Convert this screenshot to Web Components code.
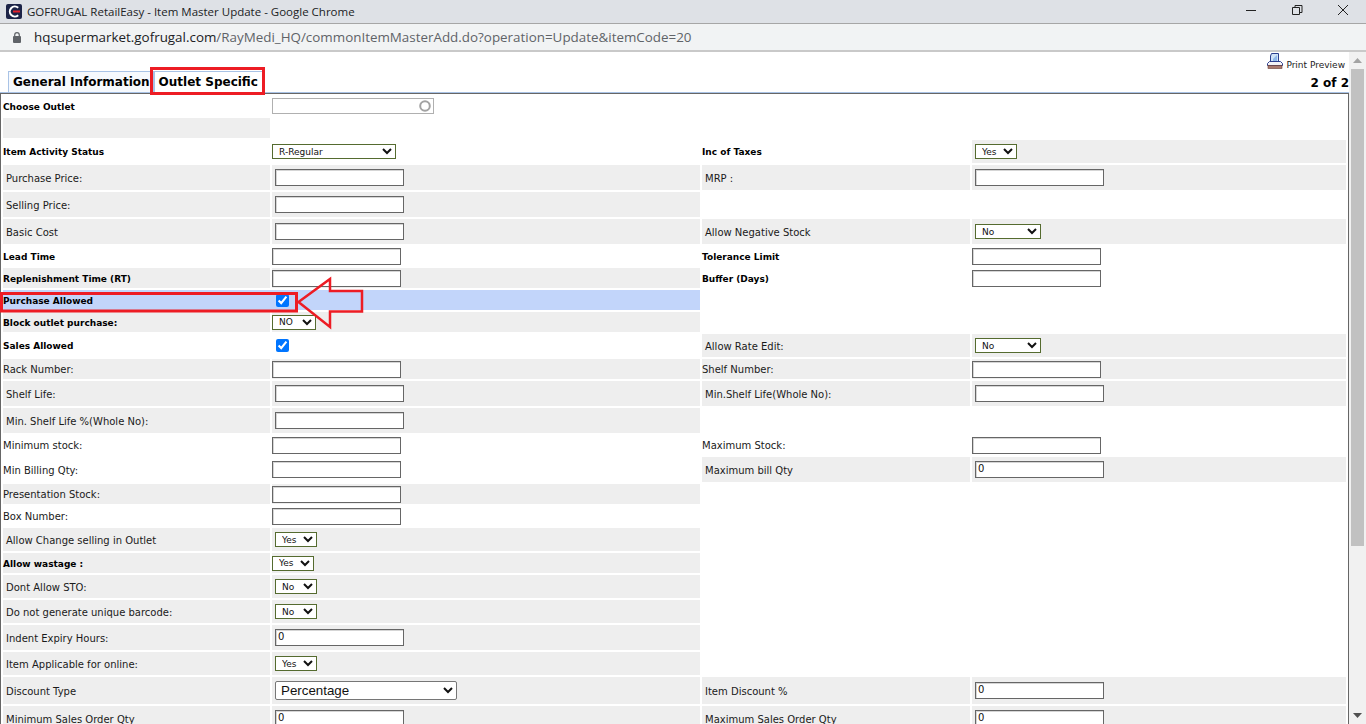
<!DOCTYPE html>
<html>
<head>
<meta charset="utf-8">
<title>GOFRUGAL RetailEasy - Item Master Update</title>
<style>
  html, body { margin: 0; height: 724px; overflow: hidden; background: #fff; }
  body { font: 10px "DejaVu Sans", sans-serif; color: #111; position: relative; }
  .page { display: flex; height: 672px; }
  .main { width: 1349px; }
</style>
</head>
<body>

<browser-bar
  title="GOFRUGAL RetailEasy - Item Master Update - Google Chrome"
  host="hqsupermarket.gofrugal.com"
  path="/RayMedi_HQ/commonItemMasterAdd.do?operation=Update&amp;itemCode=20"></browser-bar>

<div class="page">
  <div class="main">
    <tab-strip>
      <tab-item>General Information</tab-item>
      <tab-item active>Outlet Specific</tab-item>
    </tab-strip>

    <form-frame>
      <form-row h="20">
        <row-cell bold>Choose Outlet</row-cell>
        <row-cell><outlet-picker></outlet-picker></row-cell>
      </form-row>
      <form-row h="20"><row-cell grey></row-cell></form-row>
      <form-row h="23">
        <row-cell bold>Item Activity Status</row-cell>
        <row-cell><drop-down w="124" value="R-Regular"></drop-down></row-cell>
        <row-cell bold>Inc of Taxes</row-cell>
        <row-cell grey inset><drop-down w="42" value="Yes"></drop-down></row-cell>
      </form-row>
      <form-row h="25">
        <row-cell grey indent>Purchase Price:</row-cell>
        <row-cell grey inset><text-field></text-field></row-cell>
        <row-cell grey indent>MRP :</row-cell>
        <row-cell grey inset><text-field></text-field></row-cell>
      </form-row>
      <form-row h="25">
        <row-cell grey indent>Selling Price:</row-cell>
        <row-cell grey inset><text-field></text-field></row-cell>
      </form-row>
      <form-row h="25">
        <row-cell grey indent>Basic Cost</row-cell>
        <row-cell grey inset><text-field></text-field></row-cell>
        <row-cell grey indent>Allow Negative Stock</row-cell>
        <row-cell grey inset><drop-down w="66" value="No"></drop-down></row-cell>
      </form-row>
      <form-row h="20">
        <row-cell bold>Lead Time</row-cell>
        <row-cell><text-field></text-field></row-cell>
        <row-cell bold>Tolerance Limit</row-cell>
        <row-cell><text-field></text-field></row-cell>
      </form-row>
      <form-row h="20">
        <row-cell grey bold>Replenishment Time (RT)</row-cell>
        <row-cell grey><text-field></text-field></row-cell>
        <row-cell bold>Buffer (Days)</row-cell>
        <row-cell><text-field></text-field></row-cell>
      </form-row>
      <form-row h="20" highlight>
        <row-cell bold>Purchase Allowed</row-cell>
        <row-cell><tick-box></tick-box></row-cell>
      </form-row>
      <form-row h="20">
        <row-cell grey bold>Block outlet purchase:</row-cell>
        <row-cell grey><drop-down w="44" value="NO"></drop-down></row-cell>
      </form-row>
      <form-row h="23">
        <row-cell bold>Sales Allowed</row-cell>
        <row-cell><tick-box></tick-box></row-cell>
        <row-cell grey indent>Allow Rate Edit:</row-cell>
        <row-cell grey inset><drop-down w="66" value="No"></drop-down></row-cell>
      </form-row>
      <form-row h="20">
        <row-cell grey>Rack Number:</row-cell>
        <row-cell grey><text-field></text-field></row-cell>
        <row-cell grey>Shelf Number:</row-cell>
        <row-cell grey><text-field></text-field></row-cell>
      </form-row>
      <form-row h="25">
        <row-cell grey indent>Shelf Life:</row-cell>
        <row-cell grey inset><text-field></text-field></row-cell>
        <row-cell grey indent>Min.Shelf Life(Whole No):</row-cell>
        <row-cell grey inset><text-field></text-field></row-cell>
      </form-row>
      <form-row h="25">
        <row-cell grey indent>Min. Shelf Life %(Whole No):</row-cell>
        <row-cell grey inset><text-field></text-field></row-cell>
      </form-row>
      <form-row h="20">
        <row-cell>Minimum stock:</row-cell>
        <row-cell><text-field></text-field></row-cell>
        <row-cell>Maximum Stock:</row-cell>
        <row-cell><text-field></text-field></row-cell>
      </form-row>
      <form-row h="25">
        <row-cell low>Min Billing Qty:</row-cell>
        <row-cell><text-field></text-field></row-cell>
        <row-cell grey indent>Maximum bill Qty</row-cell>
        <row-cell grey inset><text-field value="0"></text-field></row-cell>
      </form-row>
      <form-row h="20">
        <row-cell grey>Presentation Stock:</row-cell>
        <row-cell grey><text-field></text-field></row-cell>
      </form-row>
      <form-row h="20">
        <row-cell>Box Number:</row-cell>
        <row-cell><text-field></text-field></row-cell>
      </form-row>
      <form-row h="23">
        <row-cell grey indent>Allow Change selling in Outlet</row-cell>
        <row-cell grey inset><drop-down w="42" value="Yes"></drop-down></row-cell>
      </form-row>
      <form-row h="20">
        <row-cell grey bold>Allow wastage :</row-cell>
        <row-cell grey><drop-down w="42" value="Yes"></drop-down></row-cell>
      </form-row>
      <form-row h="23">
        <row-cell grey indent>Dont Allow STO:</row-cell>
        <row-cell grey inset><drop-down w="42" value="No"></drop-down></row-cell>
      </form-row>
      <form-row h="23">
        <row-cell grey indent>Do not generate unique barcode:</row-cell>
        <row-cell grey inset><drop-down w="42" value="No"></drop-down></row-cell>
      </form-row>
      <form-row h="25">
        <row-cell grey indent>Indent Expiry Hours:</row-cell>
        <row-cell grey inset><text-field value="0"></text-field></row-cell>
      </form-row>
      <form-row h="23">
        <row-cell grey indent>Item Applicable for online:</row-cell>
        <row-cell grey inset><drop-down w="42" value="Yes"></drop-down></row-cell>
      </form-row>
      <form-row h="27">
        <row-cell grey indent>Discount Type</row-cell>
        <row-cell grey inset><drop-down large w="182" value="Percentage"></drop-down></row-cell>
        <row-cell grey indent>Item Discount %</row-cell>
        <row-cell grey inset><text-field value="0"></text-field></row-cell>
      </form-row>
      <form-row h="25">
        <row-cell grey indent>Minimum Sales Order Qty</row-cell>
        <row-cell grey inset><text-field value="0"></text-field></row-cell>
        <row-cell grey indent>Maximum Sales Order Qty</row-cell>
        <row-cell grey inset><text-field value="0"></text-field></row-cell>
      </form-row>
    </form-frame>
  </div>
  <page-scrollbar></page-scrollbar>
</div>

<red-marks></red-marks>

<script>
'use strict';
(
  function () {

    // window title bar + address bar
    class BrowserBar extends HTMLElement {
      constructor() {
        super();
        const shadow = this.attachShadow({ mode: 'open' });
        shadow.innerHTML = `
        <style>
          :host { display: block; height: 52px; font-family: "Open Sans", sans-serif; }
          .title {
            height: 23px;
            background: #dee1e6;
            border-bottom: 1px solid #a6a6a6;
            display: flex;
            align-items: center;
            padding-left: 6px;
            color: #202124;
            font-size: 11.5px;
          }
          .title span { margin-left: 5px; flex: 1; }
          .title svg { display: block; flex: none; }
          .controls { display: flex; }
          .controls svg { width: 46px; height: 23px; }
          .address {
            height: 26px;
            background: #f1f3f4;
            border-bottom: 2px solid #c9c9c9;
            display: flex;
            align-items: center;
            padding-left: 13px;
            font-size: 13.4px;
            color: #5f6368;
          }
          .address svg { margin-right: 13px; }
          .address b { font-weight: 400; color: #202124; }
        </style>
        <div class="title">
          <svg width="16" height="15" viewBox="0 0 16 15">
            <rect width="16" height="15" rx="2" fill="#1c2347"/>
            <path d="M12.200 3.800A5 5 0 1 0 12.200 11.200" fill="none" stroke="#fff" stroke-width="2"/>
            <rect x="7" y="6.500" width="7" height="2" fill="#e3202c"/>
          </svg>
          <span>${this.getAttribute('title')}</span>
          <div class="controls">
            <svg viewBox="0 0 46 23"><path d="M18 10.500H28" stroke="#222" fill="none"/></svg>
            <svg viewBox="0 0 46 23"><path d="M18.500 7.500h7v7h-7zM21 7.500V5.500h7v7h-2.500" stroke="#222" fill="none"/></svg>
            <svg viewBox="0 0 46 23"><path d="M18 5l10 10M28 5L18 15" stroke="#222" fill="none"/></svg>
          </div>
        </div>
        <div class="address">
          <svg width="8" height="11" viewBox="0 0 8 11">
            <rect y="4" width="8" height="7" rx="1" fill="#5f6368"/>
            <path d="M1.700 4.500V3a2.300 2.300 0 0 1 4.600 0v1.500" fill="none" stroke="#5f6368" stroke-width="1.200"/>
          </svg>
          <div><b>${this.getAttribute('host')}</b>${this.getAttribute('path').replace('&', '&amp;')}</div>
        </div>`;
      }
    }
    customElements.define('browser-bar', BrowserBar);

    class TabStrip extends HTMLElement {
      constructor() {
        super();
        const shadow = this.attachShadow({ mode: 'open' });
        shadow.innerHTML = `
        <style>
          :host {
            display: flex;
            justify-content: space-between;
            align-items: flex-end;
            box-sizing: border-box;
            height: 41px;
            border-bottom: 1px solid #a9c3e6;
            padding-left: 8px;
            font: bold 12px "DejaVu Sans", sans-serif;
            color: #000;
          }
          .tabs { display: flex; }
          .side { display: flex; flex-direction: column; align-items: flex-end; }
          .print { display: flex; align-items: flex-end; font: 9px "DejaVu Sans", sans-serif; color: #222; margin-right: 4px; }
          .print svg { margin-right: 3px; }
          .print span { position: relative; top: 1px; }
          .count { height: 17px; margin-top: 6px; line-height: 16px; }
        </style>
        <div class="tabs"><slot></slot></div>
        <div class="side">
          <div class="print">
            <svg width="16" height="16" viewBox="0 0 16 16">
              <path d="M4.500 .5h7v8h-8V3z" fill="#cfe2f7" stroke="#2c3f8f"/>
              <path d="M6 6l4-4v6H6z" fill="#8fb8ea"/>
              <path d="M2.500 8.500h11l2 2v2h-15v-2z" fill="#f3f3f8" stroke="#2c3f8f"/>
              <rect x="1" y="12.500" width="14" height="3" fill="#a8796e" stroke="#6b3d33" stroke-width=".6"/>
            </svg>
            <span>Print Preview</span>
          </div>
          <div class="count">2 of 2</div>
        </div>`;
      }
    }
    customElements.define('tab-strip', TabStrip);

    class TabItem extends HTMLElement {
      constructor() {
        super();
        const shadow = this.attachShadow({ mode: 'open' });
        shadow.innerHTML = `
        <style>
          :host {
            display: block;
            box-sizing: border-box;
            height: 21px;
            line-height: 20px;
            padding: 0 3px 0 4px;
            border: 1px solid #a9c3e6;
            border-bottom: 0;
            background: #f6f9fd;
            white-space: nowrap;
          }
          :host([active]) { background: #fff; padding: 0 4px; }
        </style>
        <slot></slot>`;
      }
    }
    customElements.define('tab-item', TabItem);

    class FormFrame extends HTMLElement {
      constructor() {
        super();
        const shadow = this.attachShadow({ mode: 'open' });
        shadow.innerHTML = `
        <style>
          :host {
            display: flex;
            flex-direction: column;
            gap: 2px;
            box-sizing: border-box;
            width: 1349px;
            height: 631px;
            padding: 2px 2px 0;
            border: 1px solid #666;
            border-bottom: 0;
            overflow: hidden;
          }
        </style>
        <slot></slot>`;
      }
    }
    customElements.define('form-frame', FormFrame);

    // four columns: label, value, label, value
    class FormRow extends HTMLElement {
      constructor() {
        super();
        const shadow = this.attachShadow({ mode: 'open' });
        shadow.innerHTML = `
        <style>
          :host {
            display: grid;
            flex: none;
            grid-template-columns: 267px 428px 268px 374px;
            column-gap: 2px;
            height: ${this.getAttribute('h')}px;
          }
          :host([highlight]) {
            background: linear-gradient(#c2d5fa, #c2d5fa) no-repeat;
            background-size: 697px 100%;
          }
        </style>
        <slot></slot>`;
      }
    }
    customElements.define('form-row', FormRow);

    class RowCell extends HTMLElement {
      constructor() {
        super();
        const shadow = this.attachShadow({ mode: 'open' });
        shadow.innerHTML = `
        <style>
          :host {
            display: flex;
            align-items: center;
            box-sizing: border-box;
            min-width: 0;
            white-space: nowrap;
            font: 10px "DejaVu Sans", sans-serif;
            color: #1a1a1a;
          }
          :host([grey]) { background: #eeeeee; }
          :host([inset]) { padding-left: 3px; }
          :host([indent]) { padding: 2px 0 0 3px; }
          :host([low]) { padding-top: 2px; }
          :host([bold]) { padding-top: 1px; font-size: 9px; font-weight: bold; color: #000; }
        </style>
        <slot></slot>`;
      }
    }
    customElements.define('row-cell', RowCell);

    class TextField extends HTMLElement {
      constructor() {
        super();
        const shadow = this.attachShadow({ mode: 'open' });
        shadow.innerHTML = `
        <style>
          :host { display: block; width: 129px; height: 17px; }
          input {
            display: block;
            box-sizing: border-box;
            width: 100%;
            height: 100%;
            margin: 0;
            padding: 0 0 2px 2px;
            border: 1px solid #666;
            box-shadow: inset 1px 1px 0 #d5d5d5;
            border-radius: 0;
            background: #fff;
            font: 10px "DejaVu Sans", sans-serif;
            color: #111;
          }
        </style>
        <input type="text" value="${this.getAttribute('value') || ''}">`;
      }
    }
    customElements.define('text-field', TextField);

    class DropDown extends HTMLElement {
      constructor() {
        super();
        const shadow = this.attachShadow({ mode: 'open' });
        shadow.innerHTML = `
        <style>
          :host { display: block; width: ${this.getAttribute('w')}px; height: 15px; }
          :host([large]) { height: 19px; }
          select {
            display: block;
            box-sizing: border-box;
            width: 100%;
            height: 100%;
            margin: 0;
            padding: 0 0 0 2px;
            border: 1px solid #556b2f;
            border-radius: 0;
            background-color: #fff;
            font: 9px "DejaVu Sans", sans-serif;
            color: #111;
          }
          :host([large]) select {
            border: 1px solid #767676;
            border-radius: 2px;
            padding-left: 1px;
            font: 13.33px "Liberation Sans", sans-serif;
          }
        </style>
        <select><option>${this.getAttribute('value')}</option></select>`;
      }
    }
    customElements.define('drop-down', DropDown);

    class TickBox extends HTMLElement {
      constructor() {
        super();
        const shadow = this.attachShadow({ mode: 'open' });
        shadow.innerHTML = `
        <style>
          :host { display: block; padding-left: 4px; }
          input { display: block; width: 13px; height: 13px; margin: 0; accent-color: #0075ff; }
        </style>
        <input type="checkbox" checked>`;
      }
    }
    customElements.define('tick-box', TickBox);

    class OutletPicker extends HTMLElement {
      constructor() {
        super();
        const shadow = this.attachShadow({ mode: 'open' });
        shadow.innerHTML = `
        <style>
          :host {
            display: flex;
            justify-content: flex-end;
            align-items: center;
            box-sizing: border-box;
            width: 162px;
            height: 16px;
            padding-right: 2px;
            border: 1px solid #b0b0b0;
            background: #fff;
          }
        </style>
        <svg width="12" height="12" viewBox="0 0 12 12">
          <circle cx="6" cy="6" r="4.800" fill="none" stroke="#a2a2a2" stroke-width="2"/>
        </svg>`;
      }
    }
    customElements.define('outlet-picker', OutletPicker);

    class PageScrollbar extends HTMLElement {
      constructor() {
        super();
        const shadow = this.attachShadow({ mode: 'open' });
        shadow.innerHTML = `
        <style>
          :host {
            display: flex;
            flex-direction: column;
            width: 17px;
            background: #f1f1f1;
          }
          .btn { height: 17px; display: flex; justify-content: center; align-items: center; }
          .thumb { height: 477px; margin: 0 2px 0 2px; background: #c1c1c1; }
          .fill { flex: 1; }
          .down { padding-top: 6px; }
        </style>
        <div class="btn"><svg width="9" height="5" viewBox="0 0 9 5"><path d="M4.500 0L9 5H0z" fill="#a3a3a3"/></svg></div>
        <div class="thumb"></div>
        <div class="fill"></div>
        <div class="btn down"><svg width="9" height="5" viewBox="0 0 9 5"><path d="M0 0h9L4.500 5z" fill="#505050"/></svg></div>`;
      }
    }
    customElements.define('page-scrollbar', PageScrollbar);

    // the red annotations drawn over the screenshot
    class RedMarks extends HTMLElement {
      constructor() {
        super();
        const shadow = this.attachShadow({ mode: 'open' });
        shadow.innerHTML = `
        <style>
          :host { position: absolute; left: 0; top: 0; width: 1366px; height: 724px; pointer-events: none; }
          svg { display: block; }
        </style>
        <svg width="1366" height="724" viewBox="0 0 1366 724" fill="none" stroke="#ed1c24">
          <rect x="151.500" y="68.500" width="112" height="25" stroke-width="3"/>
          <rect x="1.500" y="293.500" width="295" height="17.500" stroke-width="3"/>
          <path d="M298.500 302L330 279V291H362V311.500H330V327Z" stroke-width="2.500"/>
        </svg>`;
      }
    }
    customElements.define('red-marks', RedMarks);

  })();
</script>
</body>
</html>
